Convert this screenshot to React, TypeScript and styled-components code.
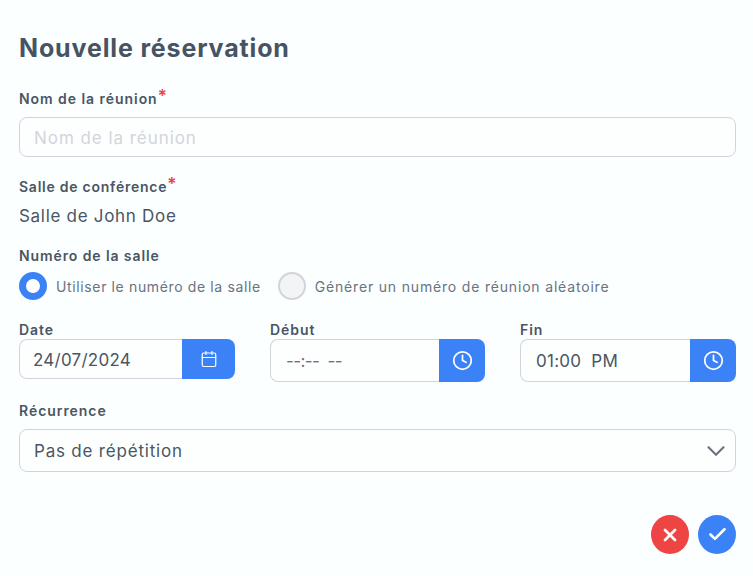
import styled, { createGlobalStyle } from 'styled-components';
import { Calendar, Check, ChevronDown, Clock, X } from 'lucide-react';

const GlobalStyle = createGlobalStyle`
  html, body {
    margin: 0;
    background: #fbffff;
    font-family: Inter, "Noto Sans", sans-serif;
  }
  * { box-sizing: border-box; }
`;

const Page = styled.div`
  width: 753px;
  height: 576px;
  padding: 30px 17px 0 19px;
  overflow: hidden;
`;
const Title = styled.h1`
  margin: 0 0 23px;
  height: 36px;
  font-size: 25px;
  line-height: 36px;
  font-weight: 700;
  letter-spacing: 0.85px;
  color: #475363;
`;
const Label = styled.div<{ $spacing?: number }>`
  height: 19px;
  font-size: 14px;
  line-height: 19px;
  font-weight: 600;
  letter-spacing: ${(p) => p.$spacing ?? 0.95}px;
  color: #4b5563;
  white-space: nowrap;
`;
const Required = styled.span`
  color: #ef4444;
  font-size: 17px;
  line-height: 10px;
  letter-spacing: 0;
  position: relative;
  top: -2px;
`;
const TextBox = styled.div<{ $h: number; $muted?: boolean; $spacing: number }>`
  display: flex;
  align-items: center;
  justify-content: space-between;
  height: ${(p) => p.$h}px;
  padding: ${(p) => (p.$muted ? '2px' : '0')} 12px 0 14px;
  border: 1px solid #d1d5db;
  border-radius: 8px;
  background: #fdffff;
  font-size: 17px;
  letter-spacing: ${(p) => p.$spacing}px;
  color: ${(p) => (p.$muted ? '#d1d5db' : '#4b5563')};
`;
const NameField = styled.div`
  margin-top: 9px;
  margin-bottom: 20px;
`;
const StaticValue = styled.div`
  margin: 8px 0 18px;
  height: 24px;
  font-size: 17px;
  line-height: 24px;
  letter-spacing: 0.7px;
  color: #4b5563;
`;
const RadioRow = styled.div`
  display: flex;
  align-items: center;
  gap: 17px;
  margin-top: 7px;
  margin-bottom: 20px;
`;
const RadioItem = styled.div<{ $spacing: number }>`
  display: flex;
  align-items: center;
  gap: 9px;
  font-size: 14px;
  letter-spacing: ${(p) => p.$spacing}px;
  color: #6b7280;
  white-space: nowrap;
`;
const Radio = styled.span<{ $on?: boolean }>`
  width: 28px;
  height: 28px;
  border-radius: 50%;
  background: ${(p) => (p.$on ? '#fff' : '#f3f4f6')};
  border: ${(p) => (p.$on ? '7px solid #3b82f6' : '2px solid #d1d5db')};
`;
const TimeRow = styled.div`
  display: grid;
  grid-template-columns: 216px 215px 216px;
  gap: 35px;
  margin-bottom: 19px;
  align-items: start;
`;
const Group = styled.div<{ $h: number }>`
  display: flex;
  height: ${(p) => p.$h}px;
`;
const GroupValue = styled.div<{ $dim?: boolean; $inset: number; $top?: number }>`
  flex: 1;
  display: flex;
  align-items: center;
  padding-left: ${(p) => p.$inset}px;
  padding-top: ${(p) => p.$top ?? 0}px;
  border: 1px solid #d1d5db;
  border-right: 0;
  border-radius: 8px 0 0 8px;
  background: #fdffff;
  font-size: 17px;
  letter-spacing: ${(p) => (p.$dim ? '-0.6px' : '0.25px')};
  white-space: pre;
  color: ${(p) => (p.$dim ? '#6b7280' : '#4b5563')};
`;
const GroupButton = styled.div<{ $w: number }>`
  width: ${(p) => p.$w}px;
  display: flex;
  align-items: center;
  justify-content: center;
  background: #3b82f6;
  border-radius: 0 8px 8px 0;
  color: #fff;
`;
const Arrow = styled(ChevronDown)`
  margin-right: -8px;
  color: #6b7280;
`;
const Actions = styled.div`
  display: flex;
  justify-content: flex-end;
  gap: 9px;
  margin-top: 43px;
`;
const RoundButton = styled.button<{ $bg: string }>`
  width: 38px;
  height: 39px;
  padding: 0;
  border: 0;
  border-radius: 50%;
  display: flex;
  align-items: center;
  justify-content: center;
  background: ${(p) => p.$bg};
  color: #fff;
`;

export default function App() {
  return (
    <Page>
      <GlobalStyle />
      <Title>Nouvelle réservation</Title>
      <Label>
        Nom de la réunion<Required>*</Required>
      </Label>
      <NameField>
        <TextBox $h={40} $muted $spacing={0.95}>
          Nom de la réunion
        </TextBox>
      </NameField>
      <Label $spacing={0.75}>
        Salle de conférence<Required>*</Required>
      </Label>
      <StaticValue>Salle de John Doe</StaticValue>
      <Label $spacing={0.9}>Numéro de la salle</Label>
      <RadioRow>
        <RadioItem $spacing={0.63}>
          <Radio $on />
          Utiliser le numéro de la salle
        </RadioItem>
        <RadioItem $spacing={0.82}>
          <Radio />
          Générer un numéro de réunion aléatoire
        </RadioItem>
      </RadioRow>
      <TimeRow>
        <div>
          <Label>Date</Label>
          <Group $h={40}>
            <GroupValue $inset={13} $top={2}>24/07/2024</GroupValue>
            <GroupButton $w={53}>
              <Calendar size={18} strokeWidth={1.6} />
            </GroupButton>
          </Group>
        </div>
        <div>
          <Label>Début</Label>
          <Group $h={43}>
            <GroupValue $dim $inset={15}>--:--  --</GroupValue>
            <GroupButton $w={46}>
              <Clock size={21} strokeWidth={2} />
            </GroupButton>
          </Group>
        </div>
        <div>
          <Label>Fin</Label>
          <Group $h={43}>
            <GroupValue $inset={15}>01:00  PM</GroupValue>
            <GroupButton $w={46}>
              <Clock size={21} strokeWidth={2} />
            </GroupButton>
          </Group>
        </div>
      </TimeRow>
      <Label>Récurrence</Label>
      <NameField>
        <TextBox $h={43} $spacing={0.8}>
          Pas de répétition
          <Arrow size={30} strokeWidth={1.7} />
        </TextBox>
      </NameField>
      <Actions>
        <RoundButton $bg="#ef4444">
          <X size={20} strokeWidth={3.2} />
        </RoundButton>
        <RoundButton $bg="#3b82f6">
          <Check size={21} strokeWidth={3} />
        </RoundButton>
      </Actions>
    </Page>
  );
}
